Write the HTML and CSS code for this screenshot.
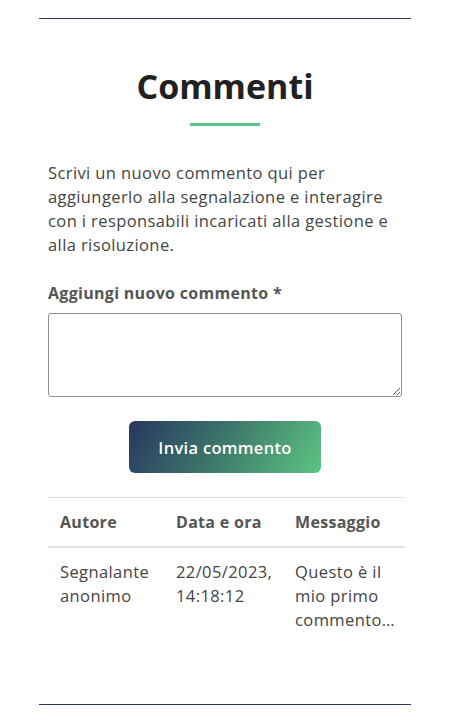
FILE: index.html
```html
<!DOCTYPE html>
<html lang="it">

<head>
    <meta charset="UTF-8">
    <meta name="viewport" content="width=device-width, initial-scale=1.0">
    <title>Commenti</title>
    <link rel="stylesheet" href="styles.css">
</head>

<body>
    <section class="comments">
        <h2 class="comments-title">Commenti</h2>
        <div class="title-bar"></div>

        <p class="intro">Scrivi un nuovo commento qui per aggiungerlo alla segnalazione e interagire con i responsabili incaricati alla gestione e alla risoluzione.</p>

        <form class="comment-form" onsubmit="return false">
            <label for="newComment">Aggiungi nuovo commento *</label>
            <textarea id="newComment"></textarea>
            <div class="form-actions">
                <button type="submit" class="send-button">Invia commento</button>
            </div>
        </form>

        <table class="comments-table">
            <thead>
                <tr>
                    <th>Autore</th>
                    <th>Data e ora</th>
                    <th>Messaggio</th>
                </tr>
            </thead>
            <tbody>
                <tr>
                    <td>Segnalante anonimo</td>
                    <td>22/05/2023, 14:18:12</td>
                    <td>Questo è il mio primo commento…</td>
                </tr>
            </tbody>
        </table>
    </section>
</body>

</html>
```

FILE: styles.css
```css
body {
    font-family: 'Open Sans', sans-serif;
    background-color: #ffffff;
    color: #444444;
    margin: 0;
    padding: 18px 39px 0;
}

.comments {
    border-top: 1px solid #2b3a5f;
    border-bottom: 1px solid #2b3a5f;
    padding: 0 9px;
    height: 687px;
    box-sizing: border-box;
}

.comments-title {
    font-size: 34px;
    font-weight: 700;
    color: #212121;
    text-align: center;
    margin: 45px 0 0;
    line-height: 44px;
}

.title-bar {
    width: 70px;
    height: 3px;
    background-color: #5cc583;
    margin: 15px auto 0;
}

.intro {
    font-size: 16.5px;
    letter-spacing: 0.4px;
    line-height: 24px;
    margin: 35px 0 0;
    color: #444444;
}

.comment-form {
    margin-top: 24px;
}

.comment-form label {
    display: block;
    font-size: 16px;
    letter-spacing: 0.3px;
    font-weight: 700;
    color: #555555;
    line-height: 24px;
}

.comment-form textarea {
    display: block;
    width: 100%;
    height: 84px;
    box-sizing: border-box;
    margin-top: 8px;
    border: 1px solid #8f8d99;
    border-radius: 3px;
    font-family: inherit;
    font-size: 15px;
}

.form-actions {
    display: flex;
    justify-content: center;
    margin-top: 24px;
}

.send-button {
    width: 192px;
    height: 52px;
    border: none;
    border-radius: 6px;
    background: linear-gradient(120deg, #263760 0%, #3f7a6c 50%, #5cc583 100%);
    color: #ffffff;
    font-family: inherit;
    font-size: 16.5px;
    letter-spacing: 0.3px;
    font-weight: 600;
    cursor: pointer;
}

.comments-table {
    width: calc(100% + 3px);
    margin-top: 24px;
    border-collapse: collapse;
    border-top: 1px solid #dee2e6;
    table-layout: fixed;
}

.comments-table th,
.comments-table td {
    padding: 12px 6px 12px 12px;
    text-align: left;
    vertical-align: top;
    line-height: 24px;
}

.comments-table th {
    font-size: 16px;
    letter-spacing: 0.3px;
    font-weight: 700;
    color: #555555;
    border-bottom: 2px solid #dee2e6;
}

.comments-table td {
    font-size: 16.5px;
    letter-spacing: 0.4px;
    color: #444444;
}

.comments-table th:nth-child(1) {
    width: 98px;
}

.comments-table th:nth-child(2) {
    width: 101px;
}
```
